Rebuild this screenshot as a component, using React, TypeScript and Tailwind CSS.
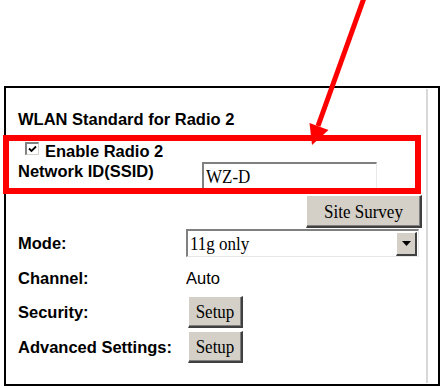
import React from "react";

const sans = { fontFamily: '"Liberation Sans", Arial, sans-serif' };
const serif = { fontFamily: '"Liberation Serif", "Times New Roman", serif' };

function ClassicButton({ label, className }: { label: string; className: string }) {
  return (
    <div
      className={`flex items-center justify-center bg-[#d4d0c8] border-t border-l border-t-white border-l-white border-r-2 border-b-2 border-r-[#404040] border-b-[#404040] shadow-[inset_-1px_-1px_0_#808080] text-[17px] text-black leading-none ${className}`}
      style={serif}
    >
      <span className="inline-block scale-y-115">{label}</span>
    </div>
  );
}

function Row({ label, className, children }: { label: string; className: string; children?: React.ReactNode }) {
  return (
    <div className={`flex ${className}`}>
      <span className="w-[168px] shrink-0 font-bold text-[16.5px] leading-[18px] text-black">{label}</span>
      {children}
    </div>
  );
}

export default function App() {
  return (
    <div className="relative w-[441px] h-[388px] bg-white overflow-hidden" style={sans}>
      <div className="ml-[4px] pt-[86px]">
        <div className="flex w-[436px] h-[300px] border-2 border-black">
          <div className="flex-1 flex flex-col pl-[12px]">
            <div className="mt-[22px] h-[18px] font-bold text-[16.5px] leading-[18px] text-black">
              WLAN Standard for Radio 2
            </div>

            {/* Enable checkbox */}
            <div className="mt-[14px] h-[18px] flex items-start">
              <div className="ml-[7px] w-[14px] h-[13px] bg-white border-l-2 border-t-2 border-l-[#808080] border-t-[#808080] border-r border-b border-r-[#d4d0c8] border-b-[#d4d0c8] flex items-center justify-center">
                <svg width="9" height="8" viewBox="0 0 9 8">
                  <path d="M1 3.5 L3.5 6 L8 1.5" stroke="#000" strokeWidth="1.8" fill="none" />
                </svg>
              </div>
              <span className="ml-[6px] font-bold text-[16.5px] leading-[18px] text-black">Enable Radio 2</span>
            </div>

            {/* SSID */}
            <div className="mt-[2px] h-[28px] flex items-start">
              <span className="w-[184px] shrink-0 font-bold text-[16.5px] leading-[18px] text-black">Network ID(SSID)</span>
              <div
                className="w-[175px] h-[28px] bg-white border-t-2 border-l-2 border-t-[#808080] border-l-[#808080] border-r border-b border-r-[#e8e8e8] border-b-[#e8e8e8] pl-[2px] flex items-center text-[17px] text-black"
                style={serif}
              >
                <span className="inline-block scale-y-115">WZ-D</span>
              </div>
            </div>

            <div className="mt-[5px] h-[33px] flex">
              <ClassicButton label="Site Survey" className="ml-[288px] w-[116px] h-[33px]" />
            </div>

            <Row label="Mode:" className="mt-[1px] h-[28px] items-center">
              <div className="w-[233px] h-[28px] flex items-center bg-white border-t-2 border-l-2 border-t-[#808080] border-l-[#808080] border-r border-b border-r-[#e8e8e8] border-b-[#e8e8e8]">
                <span className="flex-1 pl-[2px] text-[17px] text-black" style={serif}>
                  <span className="inline-block scale-y-115">11g only</span>
                </span>
                <div className="w-[21px] h-[24px] mr-[1px] flex items-center justify-center bg-[#d4d0c8] border-t border-l border-t-white border-l-white border-r-2 border-b-2 border-r-[#404040] border-b-[#404040]">
                  <svg width="9" height="5" viewBox="0 0 9 5">
                    <path d="M0 0 H9 L4.5 5 Z" fill="#000" />
                  </svg>
                </div>
              </div>
            </Row>

            <Row label="Channel:" className="mt-[12px] h-[18px] items-center">
              <span className="text-[16.5px] leading-[18px] text-black">Auto</span>
            </Row>

            <Row label="Security:" className="mt-[9px] h-[32px] items-center">
              <ClassicButton label="Setup" className="ml-[2px] w-[55px] h-[32px]" />
            </Row>

            <Row label="Advanced Settings:" className="mt-[3px] h-[32px] items-center">
              <ClassicButton label="Setup" className="ml-[2px] w-[55px] h-[32px]" />
            </Row>
          </div>
          <div className="w-[12px] my-[1px] border-l-2 border-l-[#d8d8d8]" />
        </div>
      </div>

      {/* annotation overlay */}
      <div className="absolute left-[3px] top-[135px] w-[418px] h-[59px] border-[6px] border-[#ff0000]" />
      <svg className="absolute left-0 top-0" width="441" height="388" viewBox="0 0 441 388">
        <line x1="364" y1="-2" x2="318" y2="126" stroke="#ff0000" strokeWidth="5" />
        <polygon points="328.5,130 309.5,123 312,145" fill="#ff0000" />
      </svg>
    </div>
  );
}
